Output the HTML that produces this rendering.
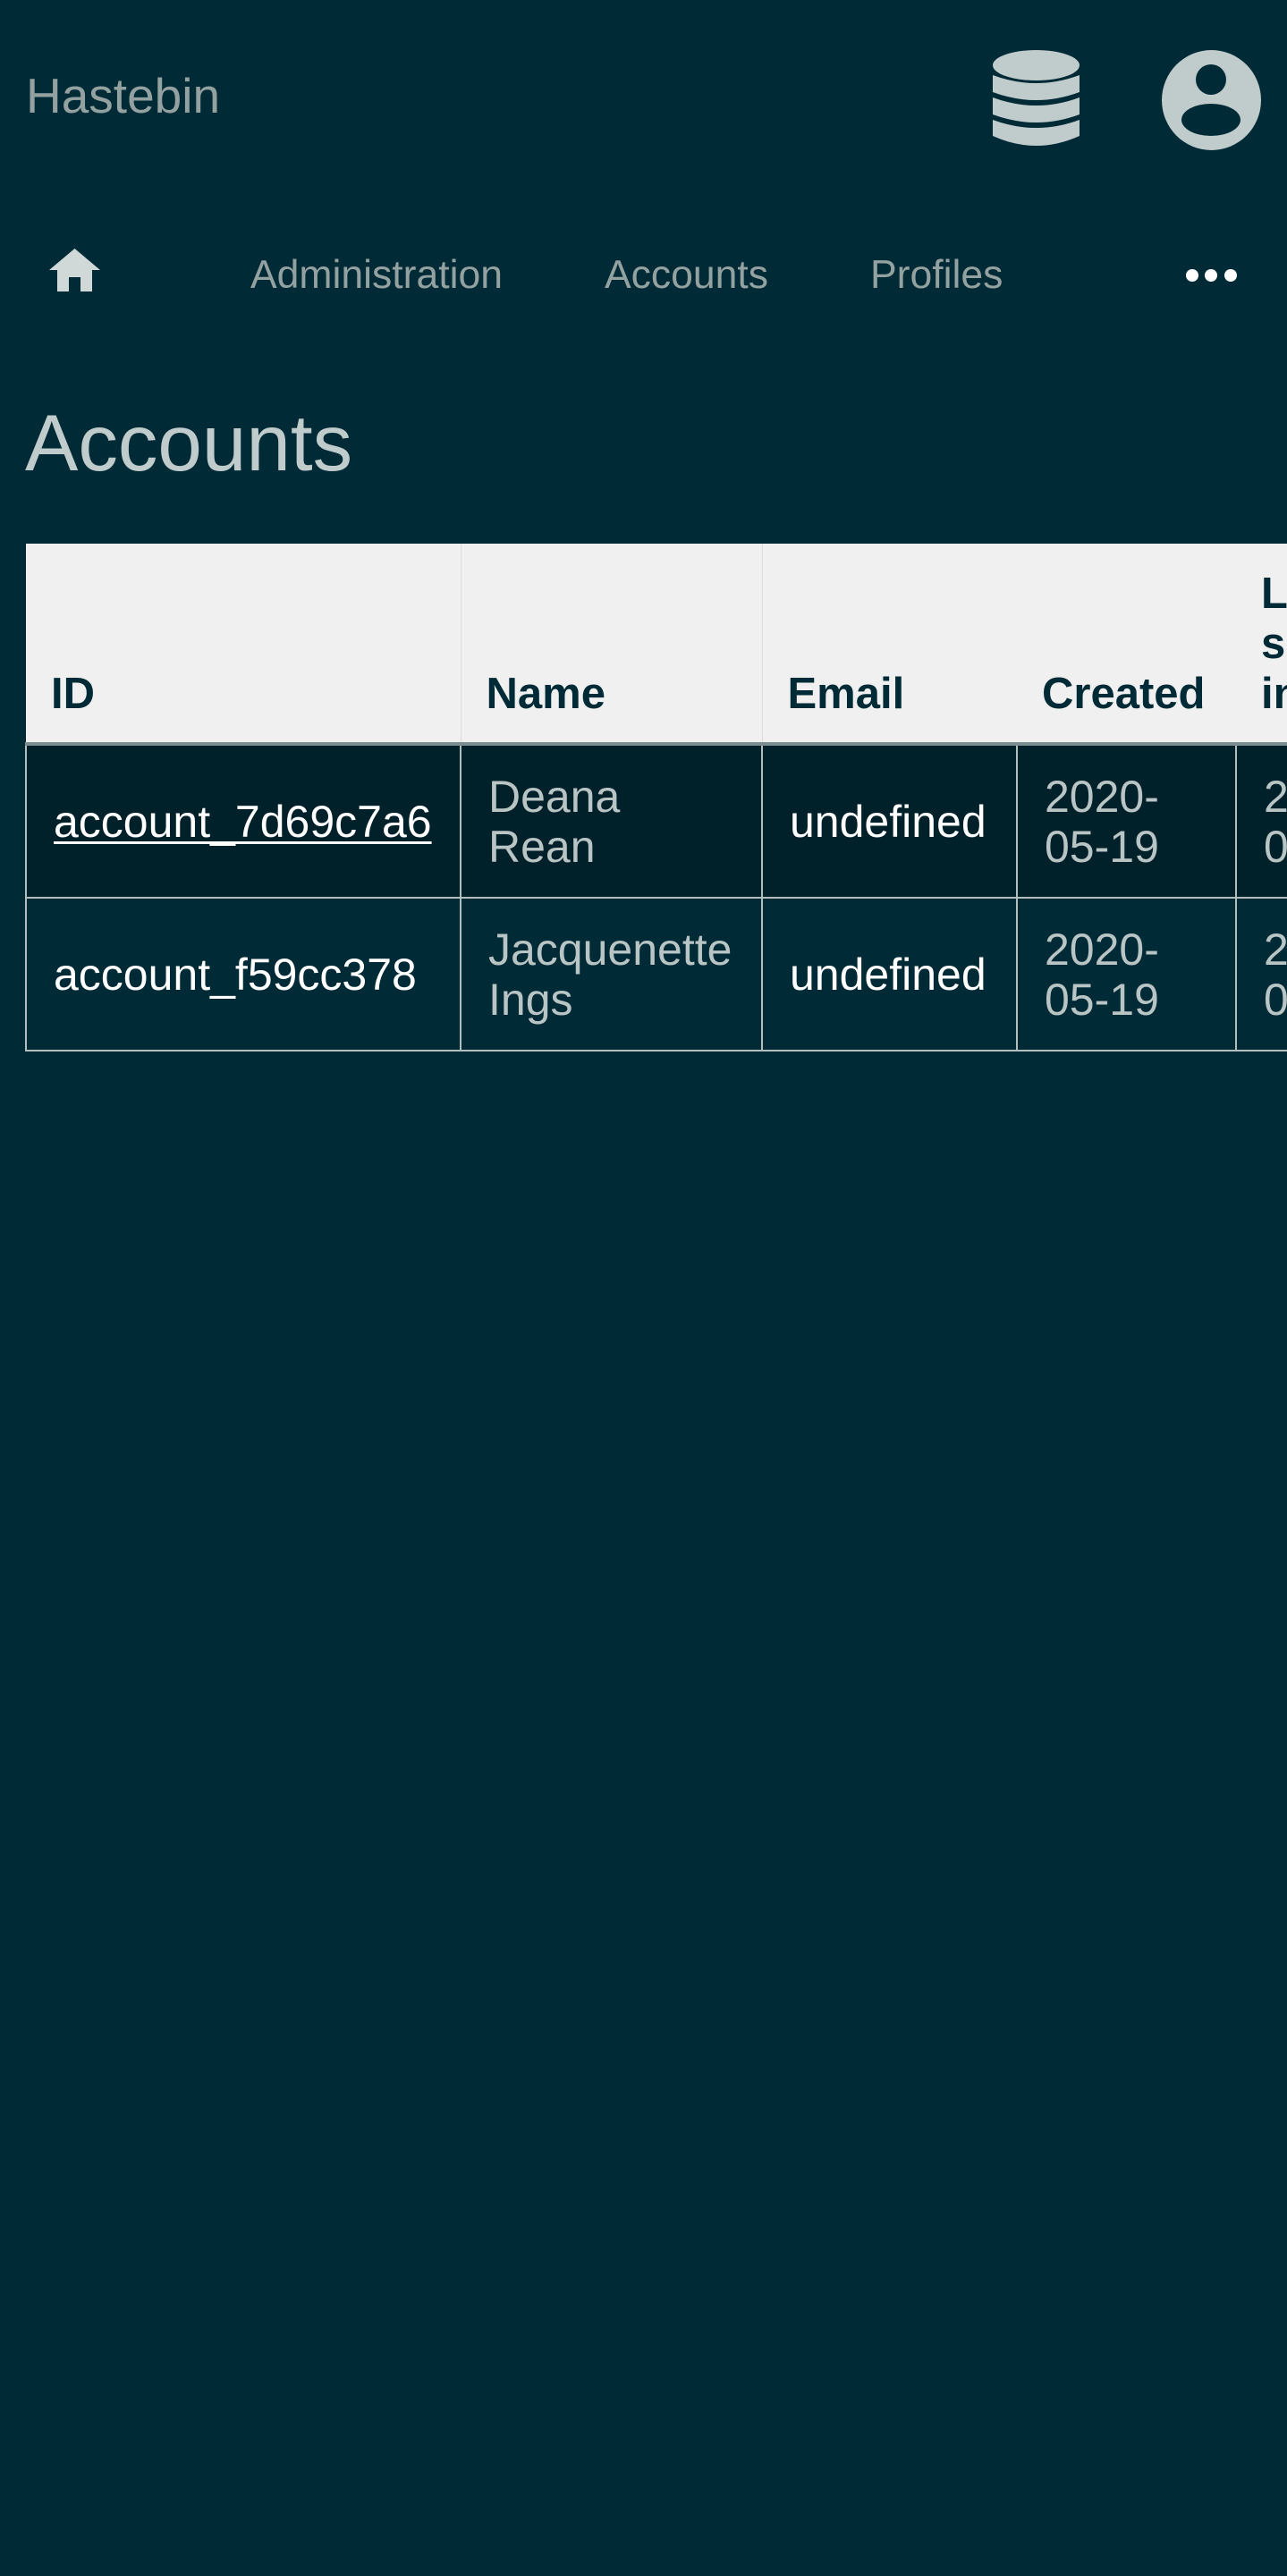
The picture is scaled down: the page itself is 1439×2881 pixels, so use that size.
<!DOCTYPE html>
<html><head><meta charset="utf-8"><style>
html,body{margin:0;padding:0;background:#002b36;width:1439px;height:2881px;overflow:hidden;font-family:"Liberation Sans",sans-serif;}
.abs{position:absolute;}
.brand{left:29px;top:80px;font-size:55px;line-height:1;color:#93a1a1;}
.nav{top:286px;font-size:44.5px;line-height:1;color:#93a1a1;}
h1{position:absolute;left:28px;top:451px;margin:0;font-size:89px;font-weight:normal;line-height:1;color:#c0cbcb;}
.wrap{position:absolute;left:28px;top:608px;width:1411px;overflow:hidden;}
table{border-collapse:collapse;table-layout:fixed;width:1600px;}
th{background:#f0f0f0;color:#002b36;font-weight:bold;font-size:49px;line-height:56px;text-align:left;vertical-align:bottom;padding:28px 26px 26px 28px;border-left:1px solid #dcdcdc;border-bottom:4px solid #7b8d91;}
th:first-child{border-left:none;}
th.nb{border-left:none;}
td{font-size:50px;line-height:56px;padding:0 26px 0 30px;border:2px solid #b3bebe;vertical-align:middle;height:169px;}
tr.r1 td{background:#00202a;}
tr.r2 td{background:#002b36;}
.w{color:#fff;} .g{color:#b9c4c4;}
a{color:#fff;text-decoration:underline;text-decoration-thickness:3px;text-underline-offset:5px;}
</style></head><body>
<div class="abs brand">Hastebin</div>
<svg class="abs" style="left:1110px;top:56px" width="97" height="112" viewBox="0 0 97 112">
<g fill="#c0cbcb">
<ellipse cx="48.5" cy="17" rx="48.5" ry="17"/>
<path d="M0 28 Q48.5 46 97 28 V47 Q48.5 65 0 47Z"/>
<path d="M0 53 Q48.5 71 97 53 V72 Q48.5 90 0 72Z"/>
<path d="M0 78 Q48.5 96 97 78 V96 Q48.5 118 0 96Z"/>
</g></svg>
<svg class="abs" style="left:1299px;top:56px" width="111" height="112" viewBox="0 0 111 112">
<ellipse cx="55.5" cy="56" rx="55.5" ry="56" fill="#c0cbcb"/>
<circle cx="55" cy="33" r="17" fill="#002b36"/>
<ellipse cx="55" cy="78" rx="33" ry="18" fill="#002b36"/>
</svg>
<svg class="abs" style="left:55px;top:278px" width="57" height="48" viewBox="0 0 57 48">
<path d="M28.5 0 L57 24 H48 V48 H35 V32 H22 V48 H9 V24 H0Z" fill="#d0d8d8"/>
</svg>
<div class="abs nav" style="left:280px">Administration</div>
<div class="abs nav" style="left:676px">Accounts</div>
<div class="abs nav" style="left:973px">Profiles</div>
<svg class="abs" style="left:1320px;top:300px" width="70" height="16"><g fill="#fff"><circle cx="13" cy="8" r="7"/><circle cx="34" cy="8" r="7"/><circle cx="56" cy="8" r="7"/></g></svg>
<h1>Accounts</h1>
<div class="wrap"><table>
<colgroup><col style="width:486px"><col style="width:337px"><col style="width:285px"><col style="width:245px"><col style="width:247px"></colgroup>
<tr><th>ID</th><th>Name</th><th>Email</th><th class="nb">Created</th><th class="nb">Last signed in</th></tr>
<tr class="r1"><td><a>account_7d69c7a6</a></td><td class="g">Deana Rean</td><td class="w" style="padding-left:30px">undefined</td><td class="g">2020-05-19</td><td class="g">2020-05-19</td></tr>
<tr class="r2"><td class="w">account_f59cc378</td><td class="g">Jacquenette Ings</td><td class="w">undefined</td><td class="g">2020-05-19</td><td class="g">2020-05-19</td></tr>
</table></div>
</body></html>
